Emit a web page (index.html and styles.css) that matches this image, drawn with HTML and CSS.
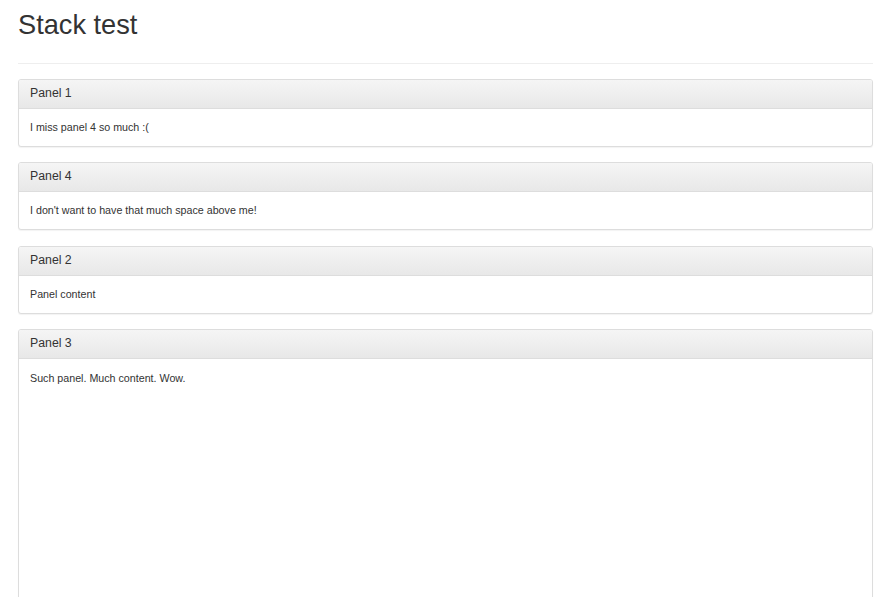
FILE: index.html
```html
<!DOCTYPE html>
<html lang="en">
<head>
    <meta charset="UTF-8">
    <meta name="viewport" content="width=device-width, initial-scale=1.0">
    <title>Stack test</title>
    <link rel="stylesheet" href="styles.css">
</head>
<body>
    <div class="container">
        <div class="page-header">
            <h1>Stack test</h1>
        </div>

        <div class="panel">
            <div class="panel-heading">Panel 1</div>
            <div class="panel-body">I miss panel 4 so much :(</div>
        </div>

        <div class="panel">
            <div class="panel-heading">Panel 4</div>
            <div class="panel-body">I don't want to have that much space above me!</div>
        </div>

        <div class="panel">
            <div class="panel-heading">Panel 2</div>
            <div class="panel-body">Panel content</div>
        </div>

        <div class="panel">
            <div class="panel-heading">Panel 3</div>
            <div class="panel-body tall">Such panel. Much content. Wow.</div>
        </div>
    </div>
</body>
</html>
```

FILE: styles.css
```css
* {
    margin: 0;
    padding: 0;
    box-sizing: border-box;
}

body {
    font-family: "Liberation Sans", Arial, sans-serif;
    font-size: 10.7px;
    color: #333;
    background: #fff;
}

.container {
    padding: 0 20px 0 18px;
}

.page-header {
    padding-top: 9px;
    height: 64px;
    border-bottom: 1px solid #eee;
    margin-bottom: 15px;
}

.page-header h1 {
    font-size: 27.2px;
    font-weight: 400;
    line-height: 32px;
    color: #333;
}

.panel {
    border: 1px solid #ddd;
    border-radius: 3px;
    background: #fff;
    margin-bottom: 15.4px;
    box-shadow: 0 1px 1px rgba(0, 0, 0, 0.05);
}

.panel-heading {
    height: 29px;
    padding: 0 11px;
    line-height: 27px;
    font-size: 12.3px;
    color: #333;
    background: linear-gradient(to bottom, #f5f5f5 0%, #e8e8e8 100%);
    border-bottom: 1px solid #ddd;
    border-radius: 2px 2px 0 0;
}

.panel-body {
    height: 37px;
    padding: 0 11px;
    line-height: 36px;
}

.panel-body.tall {
    height: 320px;
    padding-top: 1px;
}
```
